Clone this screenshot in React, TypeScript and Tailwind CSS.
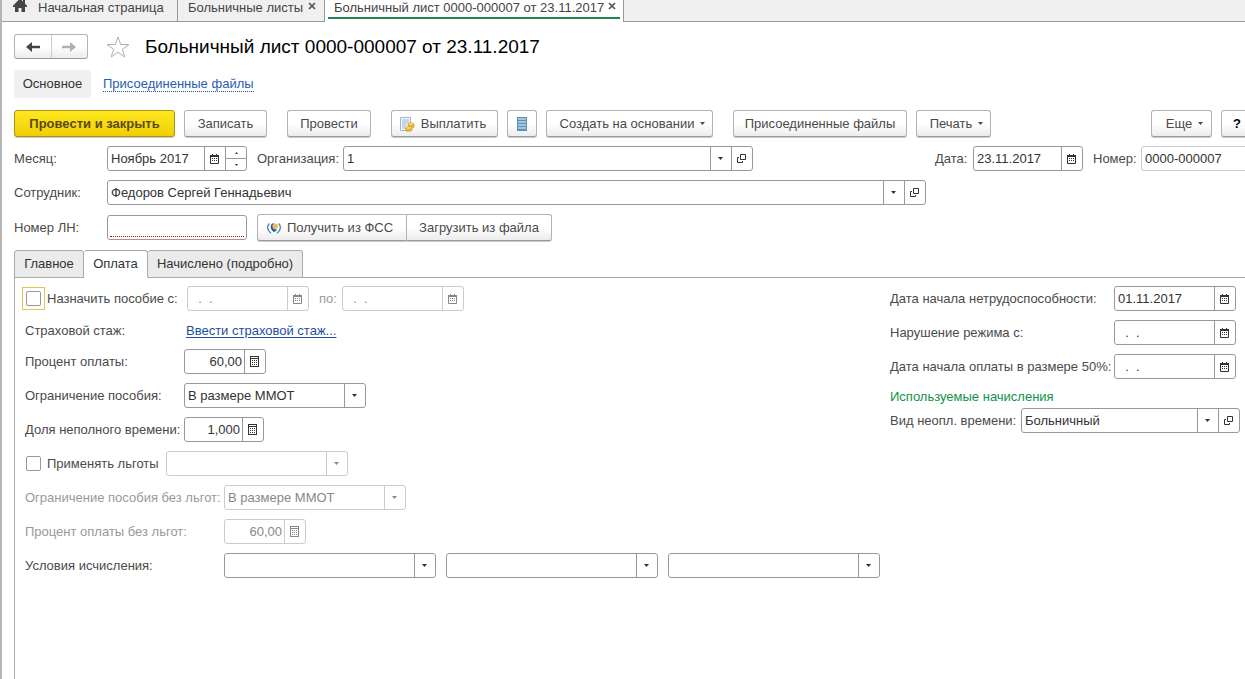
import { useState, type ReactNode } from 'react'
import clsx from 'clsx'

function HomeIcon() {
  return (
    <svg width="14" height="12" viewBox="0 0 14 12" className="shrink-0" aria-hidden="true">
      <path d="M5.500 0 0 5.800V7h2v5h3.500V8h3v4H12V7h2V5.800l-2-2.100V0h-2v1.600L8.500 0z" fill="#454545" />
    </svg>
  )
}

function CloseIcon() {
  return (
    <svg width="8" height="8" viewBox="0 0 8 8" aria-hidden="true">
      <path d="M1 1l6 6M7 1L1 7" stroke="#555" strokeWidth="1.700" />
    </svg>
  )
}

function BackIcon({ flip = false }: { flip?: boolean }) {
  return (
    <svg width="14" height="12" viewBox="0 0 14 12" aria-hidden="true">
      <path
        d={flip ? 'M0 4.700h8V1l6 5-6 5V7.300H0z' : 'M14 4.700H6V1L0 6l6 5V7.300h8z'}
        fill={flip ? '#b0b0b0' : '#454545'}
      />
    </svg>
  )
}

function StarIcon() {
  return (
    <svg width="24" height="22" viewBox="0 0 24 22" aria-hidden="true">
      <path
        d="M12 1l2.700 7.500H23l-6.700 4.800L18.800 21 12 16.300 5.200 21l2.500-7.700L1 8.500h8.300z"
        fill="#fff"
        stroke="#b0b0b0"
      />
    </svg>
  )
}

function CalendarIcon() {
  return (
    <svg width="9" height="10" viewBox="0 0 9 10" aria-hidden="true">
      <path d="M.5 1.500h8v8h-8z" fill="#fff" stroke="currentColor" />
      <path d="M0 1h9v2H0zM2 0h1v1H2zM6 0h1v1H6z" fill="currentColor" />
      <path d="M2 4h1v1H2zM4 4h1v1H4zM6 4h1v1H6zM2 6h1v1H2zM4 6h1v1H4zM6 6h1v1H6z" fill="currentColor" />
    </svg>
  )
}

function CalculatorIcon() {
  return (
    <svg width="9" height="11" viewBox="0 0 9 11" fill="currentColor" aria-hidden="true">
      <path d="M0 0h9v11H0zM1 1v1h7V1zM1 3v7h7V3z" fillRule="evenodd" />
      <path d="M2 4h1v1H2zM4 4h1v1H4zM6 4h1v1H6zM2 6h1v1H2zM4 6h1v1H4zM6 6h1v1H6zM2 8h1v1H2zM4 8h1v1H4zM6 8h1v1H6z" />
    </svg>
  )
}

function OpenIcon() {
  return (
    <svg width="9" height="9" viewBox="0 0 9 9" fill="none" stroke="currentColor" aria-hidden="true">
      <path d="M3.500.5h5v5h-5zM2 3.500H.5v5h5V7" />
    </svg>
  )
}

function CaretIcon() {
  return (
    <svg width="5" height="3" viewBox="0 0 5 3" fill="currentColor" className="shrink-0" aria-hidden="true">
      <path d="M0 0h5L2.500 3z" />
    </svg>
  )
}

function PayIcon() {
  return (
    <svg width="16" height="16" viewBox="0 0 16 16" className="shrink-0" aria-hidden="true">
      <path d="M1.500 1.500h10v13h-10z" fill="#f4f9fd" stroke="#9db8cf" />
      <path d="M3 4h7M3 6h7M3 8h5M3 10h4M3 12h3" stroke="#9ab4ca" />
      <path d="M9 8v3c0 1.500 6 1.500 6 0V8z" fill="#e9b52c" stroke="#c99a20" strokeWidth=".6" />
      <ellipse cx="12" cy="8" rx="3" ry="1.300" fill="#ffe27a" stroke="#c99a20" strokeWidth=".6" />
      <path d="M6.500 12v2c0 1.700 6.500 1.700 6.500 0v-2z" fill="#e9b52c" stroke="#c99a20" strokeWidth=".6" />
      <ellipse cx="9.700" cy="12" rx="3.200" ry="1.200" fill="#ffe27a" stroke="#c99a20" strokeWidth=".6" />
    </svg>
  )
}

function ListIcon() {
  return (
    <svg width="10" height="14" viewBox="0 0 10 14" aria-hidden="true">
      <path d="M0 0h10v14H0z" fill="#5f8eb2" />
      <path d="M1 2h8M1 5h8M1 8h8M1 11h8" stroke="#a3c6df" strokeWidth="2" />
    </svg>
  )
}

function FundIcon() {
  return (
    <svg width="14" height="12" viewBox="0 0 14 12" className="shrink-0" aria-hidden="true">
      <path d="M2.200 1.500C-.2 4.500 0 8.500 4 11.200" fill="none" stroke="#4f88bd" strokeWidth="1.400" />
      <path d="M11.800 1.500c2.400 3 2.200 7-1.800 9.700" fill="none" stroke="#4f88bd" strokeWidth="1.400" />
      <path d="M6.800 1C2.600 1.500 2.800 7.500 7 10c1.500-.5 2.500-1.300 3-2.500-2.500.4-4-1-3.900-3z" fill="#1f5c9e" />
      <circle cx="8.200" cy="4.200" r="2.800" fill="#f0b95a" />
    </svg>
  )
}

const fieldBorder = 'border-[#999]'
const mutedBorder = 'border-[#ccc]'

// Outer frame shared by every input: text area first, then small cells on the right
function Frame({ className, disabled, children }: { className?: string; disabled?: boolean; children: ReactNode }) {
  return (
    <div
      className={clsx(
        'flex h-[25px] shrink-0 overflow-hidden rounded-[3px] border bg-white',
        disabled ? mutedBorder : fieldBorder,
        disabled ? 'text-[#888]' : 'text-[#333]',
        className
      )}
    >
      {children}
    </div>
  )
}

function Cell({ label, disabled, children }: { label: string; disabled?: boolean; children: ReactNode }) {
  return (
    <button
      type="button"
      aria-label={label}
      disabled={disabled}
      className={clsx(
        'flex w-[21px] shrink-0 items-center justify-center border-l pr-[2px]',
        disabled ? mutedBorder : fieldBorder
      )}
    >
      {children}
    </button>
  )
}

type FieldProps = { id: string; value?: string; className?: string; disabled?: boolean }

function DateField({ id, value = '  .  .', className, disabled, spin }: FieldProps & { spin?: boolean }) {
  return (
    <Frame className={className} disabled={disabled}>
      <input id={id} defaultValue={value} disabled={disabled} className="min-w-0 flex-1 px-[3px] outline-none" />
      <Cell label="Выбрать дату" disabled={disabled}>
        <CalendarIcon />
      </Cell>
      {spin && (
        <div className="flex w-[21px] shrink-0 flex-col border-l border-[#999]">
          <button type="button" aria-label="Следующий месяц" className="flex flex-1 items-center justify-center border-b border-[#999]">
            <svg width="3" height="2" viewBox="0 0 3 2" aria-hidden="true">
              <path d="M0 2h3L1.500 0z" fill="#333" />
            </svg>
          </button>
          <button type="button" aria-label="Предыдущий месяц" className="flex flex-1 items-center justify-center">
            <svg width="3" height="2" viewBox="0 0 3 2" aria-hidden="true">
              <path d="M0 0h3L1.500 2z" fill="#333" />
            </svg>
          </button>
        </div>
      )}
    </Frame>
  )
}

function NumberField({ id, value, className, disabled }: FieldProps) {
  return (
    <Frame className={className} disabled={disabled}>
      <input id={id} defaultValue={value} disabled={disabled} className="min-w-0 flex-1 px-[2px] text-right outline-none" />
      <Cell label="Калькулятор" disabled={disabled}>
        <CalculatorIcon />
      </Cell>
    </Frame>
  )
}

function SelectField({ id, value = '', className, disabled, open, label }: FieldProps & { open?: boolean; label?: string }) {
  return (
    <Frame className={className} disabled={disabled}>
      <select
        id={id}
        aria-label={label}
        defaultValue={value}
        disabled={disabled}
        className="min-w-0 flex-1 appearance-none px-[3px] opacity-100 outline-none"
      >
        <option>{value}</option>
      </select>
      <span
        className={clsx(
          'flex w-[21px] shrink-0 items-center justify-center border-l pr-[2px]',
          disabled ? mutedBorder : fieldBorder
        )}
      >
        <CaretIcon />
      </span>
      {open && (
        <Cell label="Открыть">
          <OpenIcon />
        </Cell>
      )}
    </Frame>
  )
}

const buttonTone = {
  plain: 'border-[#b3b3b3] border-b-[#999] bg-linear-to-b from-white from-50% to-[#ececec]',
  main: 'border-[#a89220] bg-linear-to-b from-[#ffe81f] to-[#f0cf00] font-bold text-[#5c4a10]',
}

function Button({
  tone = 'plain',
  className,
  children,
  ...rest
}: React.ComponentProps<'button'> & { tone?: keyof typeof buttonTone }) {
  return (
    <button
      type="button"
      className={clsx(
        'flex h-[27px] shrink-0 items-center justify-center gap-[6px] rounded-[3px] border whitespace-nowrap shadow-[0_1px_0_#ccc]',
        buttonTone[tone],
        className
      )}
      {...rest}
    >
      {children}
    </button>
  )
}

function Label({ htmlFor, className, children }: { htmlFor: string; className?: string; children: ReactNode }) {
  return (
    <label htmlFor={htmlFor} className={clsx('shrink-0 whitespace-nowrap', className)}>
      {children}
    </label>
  )
}

function Row({ className, children }: { className?: string; children: ReactNode }) {
  return <div className={clsx('flex h-[25px] items-center', className)}>{children}</div>
}

const check = 'size-[15px] shrink-0 appearance-none rounded-[2px] border border-[#999] bg-white checked:bg-[#999]'

function WindowTabs() {
  return (
    <nav className="flex h-[22px] items-start border-b border-[#999] bg-[#f0f0f0] leading-[15px] text-[#444]">
      <a href="#home" className="flex h-[21px] w-[176px] shrink-0 items-start gap-[11px] border-r border-[#999] pl-[11px]">
        <HomeIcon />
        Начальная страница
      </a>
      <div className="flex h-[21px] w-[147px] shrink-0 items-start justify-between border-r border-[#999] pr-2 pl-[10px]">
        <a href="#list" className="whitespace-nowrap">Больничные листы</a>
        <button type="button" aria-label="Закрыть" className="mt-[2px]">
          <CloseIcon />
        </button>
      </div>
      <div className="h-[22px] w-[299px] shrink-0 border-r border-[#999] bg-white px-[3px]">
        <div className="flex h-[19px] items-start justify-between border-b-2 border-[#1f8352] pr-1 pl-[6px]">
          <a href="#doc" className="whitespace-nowrap">Больничный лист 0000-000007 от 23.11.2017</a>
          <button type="button" aria-label="Закрыть" className="mt-[2px]">
            <CloseIcon />
          </button>
        </div>
      </div>
    </nav>
  )
}

function Toolbar() {
  return (
    <div className="-mr-2 flex items-center">
      <Button tone="main" className="w-[161px]">Провести и закрыть</Button>
      <Button className="ml-[9px] w-[83px]">Записать</Button>
      <Button className="ml-5 w-[84px]">Провести</Button>
      <Button className="ml-5 w-[107px] pr-1">
        <PayIcon />
        Выплатить
      </Button>
      <Button className="ml-[9px] w-[30px]" aria-label="Список">
        <ListIcon />
      </Button>
      <Button className="ml-[9px] w-[167px] pl-[6px]">
        Создать на основании
        <CaretIcon />
      </Button>
      <Button className="ml-5 w-[174px]">Присоединенные файлы</Button>
      <Button className="ml-[9px] w-[75px] pl-[6px]">
        Печать
        <CaretIcon />
      </Button>
      <Button className="ml-auto w-[61px] pl-[6px]">
        Еще
        <CaretIcon />
      </Button>
      <Button className="ml-[9px] w-8 font-bold text-black">?</Button>
    </div>
  )
}

function DocumentHeader() {
  return (
    <div className="-mr-2">
      <Row className="mt-[9px]">
        <Label htmlFor="month" className="w-[93px]">Месяц:</Label>
        <DateField id="month" value="Ноябрь 2017" className="w-[140px]" spin />
        <Label htmlFor="org" className="ml-[10px] w-[86px]">Организация:</Label>
        <SelectField id="org" value="1" className="w-[410px]" open />
        <div className="ml-auto flex items-center">
          <Label htmlFor="date" className="w-[38px]">Дата:</Label>
          <DateField id="date" value="23.11.2017" className="w-[110px]" />
          <Label htmlFor="number" className="ml-[10px] w-12">Номер:</Label>
          <div className="flex h-[25px] w-28 shrink-0 rounded-[3px] border border-[#ccc] text-[#333]">
            <input id="number" defaultValue="0000-000007" className="min-w-0 flex-1 px-[3px] outline-none" />
          </div>
        </div>
      </Row>
      <Row className="mt-[9px]">
        <Label htmlFor="employee" className="w-[93px]">Сотрудник:</Label>
        <SelectField id="employee" value="Федоров Сергей Геннадьевич" className="w-[819px]" open />
      </Row>
      <Row className="mt-[10px]">
        <Label htmlFor="sheet" className="w-[93px]">Номер ЛН:</Label>
        <Frame className="w-[140px] px-[2px] pb-[2px]">
          <input id="sheet" className="min-w-0 flex-1 border-b border-dotted border-[#c00000] outline-none" />
        </Frame>
        <Button className="ml-[10px] w-[150px] rounded-r-none pr-1">
          <FundIcon />
          Получить из ФСС
        </Button>
        <Button className="w-[145px] rounded-l-none border-l-0">Загрузить из файла</Button>
      </Row>
    </div>
  )
}

const tabs = [
  { name: 'Главное', width: 'w-[70px]' },
  { name: 'Оплата', width: 'w-[64px]' },
  { name: 'Начислено (подробно)', width: 'w-[155px]' },
]

function PaymentLeft() {
  return (
    <div className="min-w-0 flex-1 pl-[10px]">
      <Row>
        <span className="-ml-[3px] flex size-[23px] shrink-0 items-center justify-center border border-[#e0c850]">
          <input id="assign" type="checkbox" className={check} />
        </span>
        <Label htmlFor="assign" className="ml-[2px] w-[140px]">Назначить пособие с:</Label>
        <DateField id="from" className="w-[122px]" disabled />
        <Label htmlFor="to" className="ml-[10px] w-[23px] text-[#999]">по:</Label>
        <DateField id="to" className="w-[122px]" disabled />
      </Row>
      <Row className="mt-[7px]">
        <span className="w-[161px]">Страховой стаж:</span>
        <a href="#experience" className="text-[#1e4f9e] underline underline-offset-2">Ввести страховой стаж...</a>
      </Row>
      <Row className="mt-[6px]">
        <Label htmlFor="percent" className="w-[159px]">Процент оплаты:</Label>
        <NumberField id="percent" value="60,00" className="w-[82px]" />
      </Row>
      <Row className="mt-[9px]">
        <Label htmlFor="limit" className="w-[159px]">Ограничение пособия:</Label>
        <SelectField id="limit" value="В размере ММОТ" className="w-[182px]" />
      </Row>
      <Row className="mt-[9px]">
        <Label htmlFor="share" className="w-[159px]">Доля неполного времени:</Label>
        <NumberField id="share" value="1,000" className="w-20" />
      </Row>
      <Row className="mt-[9px]">
        <input id="benefits" type="checkbox" className={clsx(check, 'ml-px')} />
        <Label htmlFor="benefits" className="ml-[6px] w-[119px]">Применять льготы</Label>
        <SelectField id="benefit-kind" label="Льгота" className="w-[182px]" disabled />
      </Row>
      <Row className="mt-[9px] text-[#999]">
        <Label htmlFor="limit-base" className="w-[199px]">Ограничение пособия без льгот:</Label>
        <SelectField id="limit-base" value="В размере ММОТ" className="w-[182px]" disabled />
      </Row>
      <Row className="mt-[9px] text-[#999]">
        <Label htmlFor="percent-base" className="w-[199px]">Процент оплаты без льгот:</Label>
        <NumberField id="percent-base" value="60,00" className="w-[82px]" disabled />
      </Row>
      <Row className="mt-[9px]">
        <Label htmlFor="terms-1" className="w-[199px]">Условия исчисления:</Label>
        <div className="flex gap-[10px]">
          <SelectField id="terms-1" className="w-[212px]" />
          <SelectField id="terms-2" label="Условие 2" className="w-[212px]" />
          <SelectField id="terms-3" label="Условие 3" className="w-[212px]" />
        </div>
      </Row>
    </div>
  )
}

function PaymentRight() {
  return (
    <div className="w-[355px] shrink-0">
      <Row>
        <Label htmlFor="disability" className="w-[224px]">Дата начала нетрудоспособности:</Label>
        <DateField id="disability" value="01.11.2017" className="w-[122px]" />
      </Row>
      <Row className="mt-[9px]">
        <Label htmlFor="violation" className="w-[224px]">Нарушение режима с:</Label>
        <DateField id="violation" className="w-[122px]" />
      </Row>
      <Row className="mt-[9px]">
        <Label htmlFor="half" className="w-[224px]">Дата начала оплаты в размере 50%:</Label>
        <DateField id="half" className="w-[122px]" />
      </Row>
      <h2 className="mt-[10px] h-[19px] text-[#0f9348]">Используемые начисления</h2>
      <Row>
        <Label htmlFor="kind" className="w-[131px]">Вид неопл. времени:</Label>
        <SelectField id="kind" value="Больничный" className="w-[219px]" open />
      </Row>
    </div>
  )
}

export default function App() {
  const [tab, setTab] = useState('Оплата')

  return (
    <div className="flex min-h-screen flex-col overflow-x-hidden border-l-2 border-[#b5b5b5] bg-white font-['Liberation_Sans',Arial,sans-serif] text-[13px] leading-[16px] text-[#4a4a4a]">
      <WindowTabs />
      <main className="flex flex-1 flex-col pl-3">
        <header className="mt-3 flex h-[25px] items-center">
          <div className="flex h-[25px] w-[74px] rounded-[3px] border border-[#b3b3b3] border-b-[#999] bg-linear-to-b from-white from-50% to-[#ececec]">
            <button type="button" aria-label="Назад" className="flex flex-1 items-center justify-center border-r border-[#ccc]">
              <BackIcon />
            </button>
            <button type="button" aria-label="Вперед" className="flex flex-1 items-center justify-center">
              <BackIcon flip />
            </button>
          </div>
          <button type="button" aria-label="В избранное" className="ml-[18px]">
            <StarIcon />
          </button>
          <h1 className="ml-[15px] text-[19px] leading-[24px] whitespace-nowrap text-black">Больничный лист 0000-000007 от 23.11.2017</h1>
        </header>
        <nav className="mt-[11px] mb-[12px] flex h-[28px] items-center gap-3">
          <a href="#main" className="flex h-[28px] w-[77px] items-center justify-center rounded-[3px] bg-[#f0f0f0] text-[#333]">Основное</a>
          <a href="#files" className="border-b border-dotted border-[#1e4f9e] leading-[14px] text-[#2a5db0]">Присоединенные файлы</a>
        </nav>
        <Toolbar />
        <DocumentHeader />
        <div role="tablist" className="relative z-10 mt-[10px] flex h-[28px] text-[#333]">
          {tabs.map((item) => (
            <button
              key={item.name}
              type="button"
              role="tab"
              aria-selected={tab === item.name}
              onClick={() => setTab(item.name)}
              className={clsx(
                'shrink-0 rounded-t-[3px] border border-l-0 border-[#aaa] whitespace-nowrap first:border-l',
                item.width,
                tab === item.name ? 'border-b-white bg-white' : 'bg-[#ebebeb]'
              )}
            >
              {item.name}
            </button>
          ))}
        </div>
        <section className="-mt-px flex flex-1 border-t border-l border-[#aaa] pt-2">
          <PaymentLeft />
          <PaymentRight />
        </section>
      </main>
    </div>
  )
}
